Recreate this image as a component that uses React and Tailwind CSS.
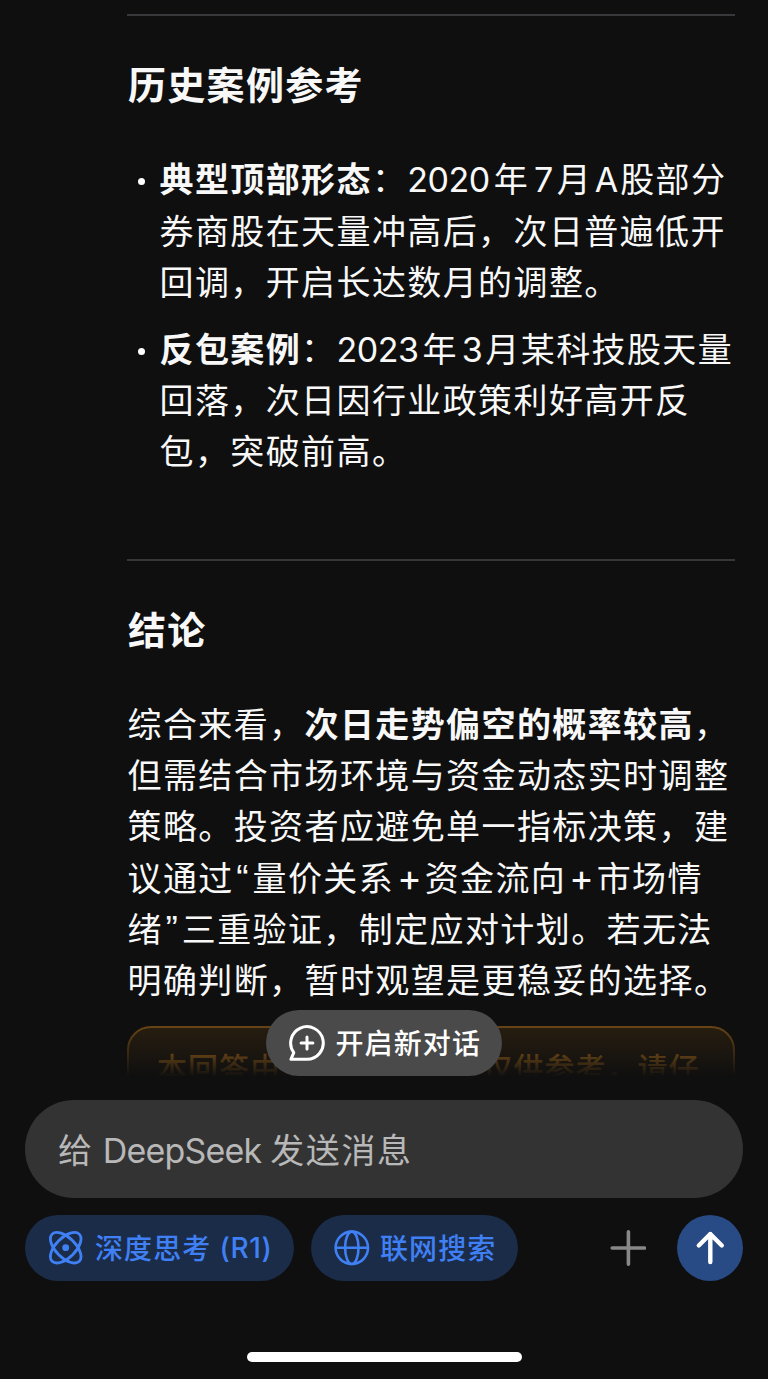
import { Fragment } from 'react';

const runClass = (part) => {
  if (part === '+') return 'px-[3px] text-[37px] leading-none tracking-normal';
  if (part === '“' || part === '”') return "pl-[2.5px] pr-[4px] font-['Liberation_Sans'] text-[37px] leading-none tracking-normal";
  if (/^\d{4}$/.test(part)) return 'pr-[4px] tracking-[-0.5px]';
  if (part === '3') return 'pl-[4px] pr-[3px] tracking-[-0.5px]';
  if (/^\d$/.test(part)) return 'pl-[5px] pr-[4px] tracking-[-0.5px]';
  return 'px-[2.5px] tracking-[-0.5px]';
};

const Mixed = ({ text }) =>
  text.split(/([A-Za-z0-9]+|[+“”])/).map((part, i) =>
    i % 2 ? (
      <span key={i} className={runClass(part)}>{part}</span>
    ) : (
      <Fragment key={i}>{part}</Fragment>
    )
  );

const Line = ({ bold, children }) => (
  <span className="block h-[51.2px] whitespace-nowrap">
    {bold && <strong className="font-bold">{bold}</strong>}
    {children}
  </span>
);

const Divider = () => <hr className="h-0.5 border-0 bg-[#38383a]" />;

const ChatPlusIcon = () => (
  <svg width="36" height="36" viewBox="0 0 36 36" fill="none" stroke="white" strokeWidth="3" strokeLinecap="round" strokeLinejoin="round">
    <path d="M18 34.3H1.9L4.8 27.6A16.3 16.3 0 1 1 18 34.3Z" />
    <path d="M18 12.1v11.8M12.1 18h11.8" />
  </svg>
);

const AtomIcon = () => (
  <svg width="36" height="36" viewBox="0 0 36 36" fill="none" stroke="currentColor" strokeWidth="2.8">
    <ellipse cx="17.7" cy="17.7" rx="19.2" ry="9.9" transform="rotate(45 17.7 17.7)" />
    <ellipse cx="17.7" cy="17.7" rx="19.2" ry="9.9" transform="rotate(-45 17.7 17.7)" />
    <circle cx="17.7" cy="17.7" r="3.4" fill="currentColor" stroke="none" />
  </svg>
);

const GlobeIcon = () => (
  <svg width="36" height="36" viewBox="0 0 36 36" fill="none" stroke="currentColor" strokeWidth="2.6">
    <circle cx="17.8" cy="17.8" r="16.2" />
    <ellipse cx="17.8" cy="17.8" rx="6.7" ry="16.2" />
    <path d="M1.6 17.8h32.4" />
  </svg>
);

const cases = [
  {
    title: '典型顶部形态',
    lines: ['：2020年7月A股部分', '券商股在天量冲高后，次日普遍低开', '回调，开启长达数月的调整。'],
  },
  {
    title: '反包案例',
    lines: ['：2023年3月某科技股天量', '回落，次日因行业政策利好高开反', '包，突破前高。'],
  },
];

const conclusion = [
  '但需结合市场环境与资金动态实时调整',
  '策略。投资者应避免单一指标决策，建',
  '议通过“量价关系+资金流向+市场情',
  '绪”三重验证，制定应对计划。若无法',
  '明确判断，暂时观望是更稳妥的选择。',
];

const Message = () => (
  <main className="h-[1076px] overflow-hidden pt-3.5 pr-[33px] pl-[127px] text-[34px] leading-[51.2px] tracking-[1.4px]">
    <Divider />
    <h2 className="mt-[43px] pl-px text-[38px] leading-[52px] font-bold tracking-[1.3px]">历史案例参考</h2>
    <ul className="mt-[43.4px] space-y-4">
      {cases.map((item) => (
        <li key={item.title} className="flex">
          <span className="mt-[24px] mr-[14.5px] ml-[11px] h-[7px] w-[7px] shrink-0 rounded-full bg-white" />
          <div>
            {item.lines.map((line, i) => (
              <Line key={line} bold={i === 0 && item.title}><Mixed text={line} /></Line>
            ))}
          </div>
        </li>
      ))}
    </ul>
    <div className="mt-[81.6px]">
      <Divider />
    </div>
    <h2 className="mt-[43px] pl-px text-[38px] leading-[52px] font-bold tracking-[1.3px]">结论</h2>
    <p className="mt-[43px] pl-[0.5px]">
      <Line>综合来看，<strong className="font-bold">次日走势偏空的概率较高</strong>，</Line>
      {conclusion.map((line) => (
        <Line key={line}><Mixed text={line} /></Line>
      ))}
    </p>
    <div className="relative mt-5 h-[140px] rounded-[24px] border-2 border-[#664314] bg-[#271d10] px-[28px] pt-[15px] text-[30px] leading-[50px] tracking-[1px] whitespace-nowrap text-[#b8751c]">
      <span className="font-medium">本回答由 <span className="tracking-[-0.5px]">AI</span> 生成，内容仅供参考，请仔</span>
      <div className="absolute -inset-x-1 top-0 h-[49px] bg-gradient-to-b from-[#0f0f0f]/0 to-[#0f0f0f]" />
    </div>
  </main>
);

const Composer = () => (
  <footer className="px-[25px] pt-6">
    <div className="flex h-[98px] items-center rounded-full bg-[#333333] pt-0.5 pl-[33px] text-[34px] text-[#b8b8b8]">
      <span className="tracking-[0.6px]">给&nbsp;</span>
      <span className="tracking-[-0.8px]">DeepSeek&nbsp;</span>
      <span className="tracking-[1.6px]">发送消息</span>
    </div>
    <div className="mt-[17px] flex h-[66px] items-center text-[28px] font-medium text-[#4080f5]">
      <button className="flex h-full w-[269px] items-center rounded-full bg-[#1b2c49] pl-[23px] whitespace-nowrap">
        <AtomIcon />
        <span className="ml-[11px] pt-px tracking-[1.1px]">深度思考</span>
        <span className="ml-2 tracking-[0.6px]">(R1)</span>
      </button>
      <button className="ml-[17px] flex h-full w-[207px] items-center rounded-full bg-[#1b2c49] pl-[22.5px] tracking-[1.1px] whitespace-nowrap">
        <GlobeIcon />
        <span className="ml-[10.5px] pt-px">联网搜索</span>
      </button>
      <button className="ml-auto">
        <svg width="36" height="36" viewBox="0 0 36 36" stroke="#888888" strokeWidth="3.6" strokeLinecap="round">
          <path d="M18.4 1.8v32.4M2.2 18h32.4" />
        </svg>
      </button>
      <button className="ml-[31px] flex h-[66px] w-[66px] items-center justify-center rounded-full bg-[#284a85]">
        <svg width="36" height="36" viewBox="0 0 36 36" fill="none" stroke="white" strokeWidth="4.4" strokeLinecap="round" strokeLinejoin="round">
          <path d="M18.3 32V4M6.8 15.5 18.3 4l11.5 11.5" />
        </svg>
      </button>
    </div>
    <div className="mx-auto mt-[71px] h-[10px] w-[275px] rounded-full bg-white" />
  </footer>
);

const App = () => (
  <div className="relative h-[1379px] w-[768px] overflow-hidden bg-[#0f0f0f] font-['Inter','Noto_Sans_CJK_SC',sans-serif] text-[#f8f8f8]" lang="zh-CN">
    <Message />
    <button className="absolute top-[1010px] left-[266px] flex h-[66px] w-[236px] items-center rounded-full bg-[#4a4a4a] pl-[22.5px] text-[28px] font-medium tracking-[1.1px] whitespace-nowrap text-white">
      <ChatPlusIcon />
      <span className="ml-[11px] pt-px">开启新对话</span>
    </button>
    <Composer />
  </div>
);

export default App;
